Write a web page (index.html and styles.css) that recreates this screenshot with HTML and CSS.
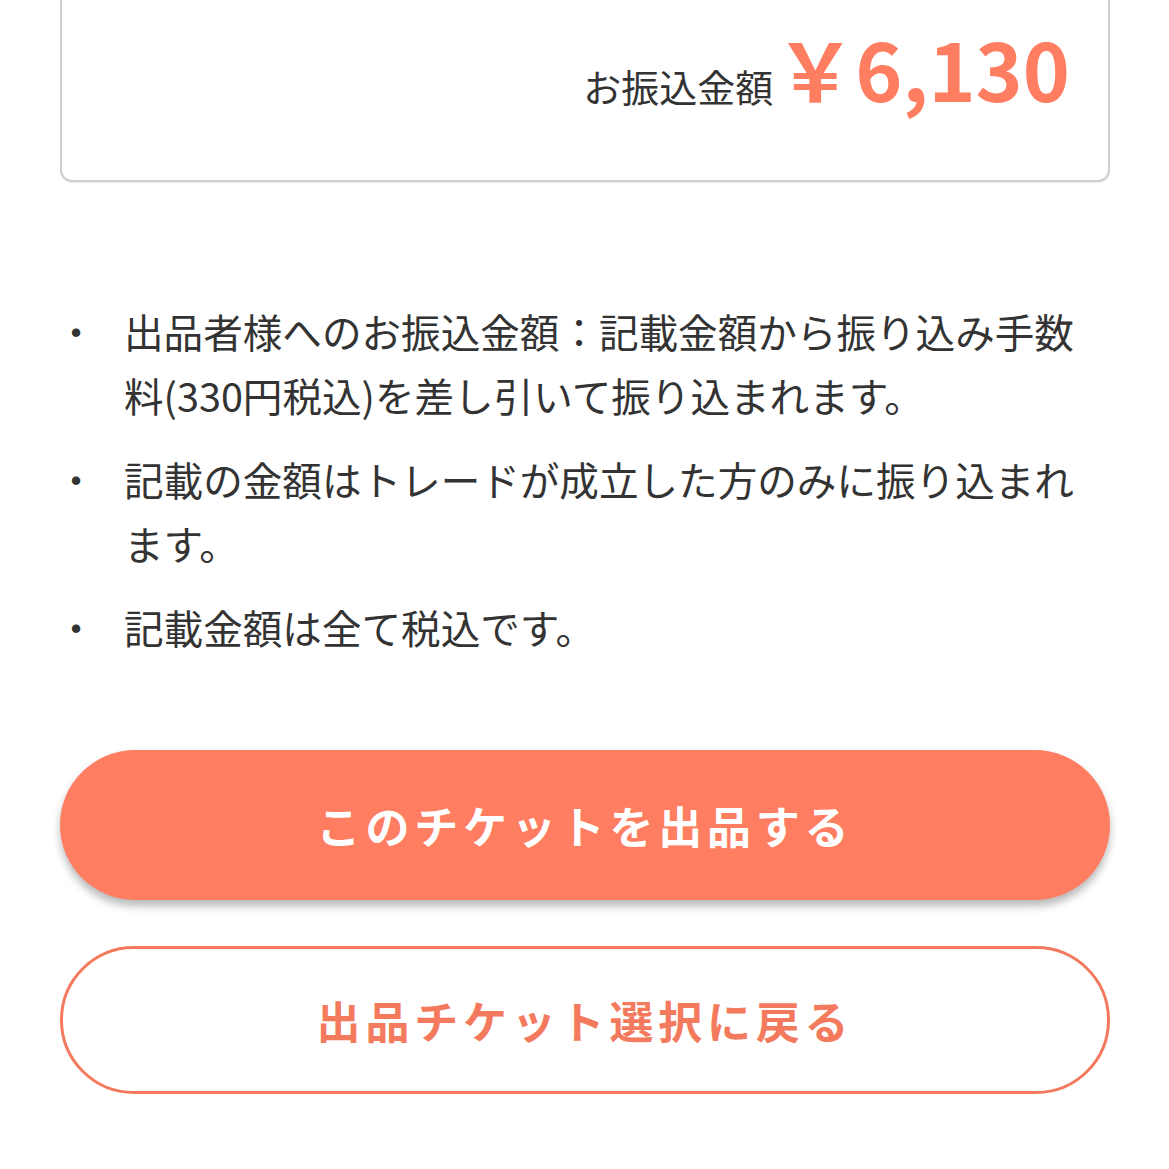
FILE: index.html
```html
<!doctype html>
<html lang="ja">
    <head>
        <meta charset="utf-8">
        <title>出品確認</title>
        <link rel="stylesheet" href="styles.css">
    </head>
    <body>
        <div class="page">
            <div class="card">
                <span class="card-label">お振込金額</span>
                <span class="card-amount">￥6,130</span>
            </div>
            <ul class="notes">
                <li>出品者様へのお振込金額：記載金額から振り込み手数料(330円税込)を差し引いて振り込まれます。</li>
                <li>記載の金額はトレードが成立した方のみに振り込まれます。</li>
                <li>記載金額は全て税込です。</li>
            </ul>
            <div class="actions">
                <button class="btn btn-primary">このチケットを出品する</button>
                <button class="btn btn-outline">出品チケット選択に戻る</button>
            </div>
        </div>
    </body>
</html>
```

FILE: styles.css
```css
* {
    margin: 0;
    padding: 0;
    box-sizing: border-box;
}
body {
    background: #fff;
    color: #333;
    font-family: "Noto Sans CJK JP", "Noto Sans", sans-serif;
    overflow: hidden;
}
.page {
    padding: 0 59px 0 60px;
}
.card {
    margin-top: -40px;
    height: 222px;
    border: 2px solid #cfcfcf;
    border-radius: 12px;
    display: flex;
    justify-content: flex-end;
    align-items: baseline;
    padding: 65px 38px 0 0;
    box-shadow: 0 1px 1px rgba(0, 0, 0, 0.08);
}
.card-label {
    font-size: 38px;
    color: #333;
    margin-right: 2px;
}
.card-amount {
    font-size: 80px;
    font-weight: 700;
    color: #ff7d60;
    line-height: 1;
}
.notes {
    list-style: none;
    margin-top: 117px;
    font-size: 39.6px;
    line-height: 64px;
}
.notes li {
    display: grid;
    grid-template-columns: 64px 1fr;
    margin-bottom: 20px;
}
.notes li::before {
    content: "・";
    width: 40px;
    margin-left: -4px;
    text-align: center;
}
.actions {
    margin-top: 91px;
    display: flex;
    flex-direction: column;
    gap: 46px;
}
.btn {
    width: 100%;
    height: 150px;
    border-radius: 75px;
    font-family: inherit;
    font-size: 44px;
    font-weight: 700;
    letter-spacing: 4.8px;
    cursor: pointer;
}
.btn-primary {
    background: #ff7d60;
    color: #fff;
    border: none;
    box-shadow: 0 6px 8px rgba(0, 0, 0, 0.28);
}
.btn-outline {
    height: 148px;
    background: #fff;
    color: #f47a5e;
    border: 3px solid #f47a5e;
}
```
